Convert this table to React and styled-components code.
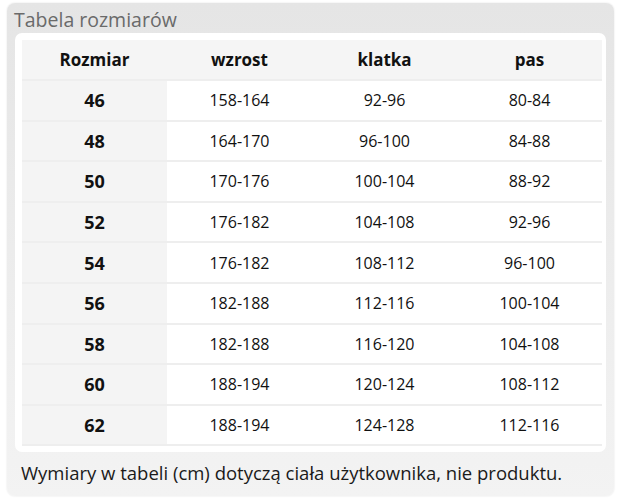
import styled, { createGlobalStyle } from "styled-components";

const Global = createGlobalStyle`
  body {
    margin: 0;
    background: #ffffff;
    font-family: "Open Sans", "Noto Sans", sans-serif;
  }
`;

const Panel = styled.section`
  margin: 3px 5px 2px 7px;
  height: 493px;
  box-sizing: border-box;
  border-radius: 8px;
  background: linear-gradient(#e5e5e5, #f3f3f3);
  box-shadow: 0 0 2px rgba(0, 0, 0, 0.12);
  padding: 5px 8px 0 8px;
  display: flex;
  flex-direction: column;
`;

const Title = styled.h3`
  margin: 0 0 1px -1px;
  font-size: 19.5px;
  font-weight: 400;
  line-height: 24px;
  color: #6a6a6a;
`;

const Card = styled.div`
  background: #ffffff;
  border-radius: 7px;
  padding: 7px 5px 6px 7px;
`;

const Table = styled.table`
  width: 580px;
  border-collapse: collapse;
  table-layout: fixed;
  color: #111;
`;

const HeadCell = styled.th`
  height: 39px;
  padding: 0;
  background: #f5f5f5;
  font-size: 17px;
  font-weight: 700;
  text-align: center;
`;

const Row = styled.tr`
  border-top: 2px solid #eeeeee;
  border-bottom: ${(p) => (p.$last ? "2px solid #eeeeee" : "none")};
`;

const Cell = styled.td`
  height: 38.6px;
  padding: 0;
  text-align: center;
  font-size: ${(p) => (p.$size ? "18px" : "16px")};
  font-weight: ${(p) => (p.$size ? 700 : 400)};
  background: ${(p) => (p.$size ? "#f4f4f4" : "#ffffff")};
`;

const Note = styled.p`
  margin: 9px 0 0 6px;
  font-size: 18.5px;
  line-height: 24px;
  color: #1a1a1a;
`;

const rows = [
  ["46", "158-164", "92-96", "80-84"],
  ["48", "164-170", "96-100", "84-88"],
  ["50", "170-176", "100-104", "88-92"],
  ["52", "176-182", "104-108", "92-96"],
  ["54", "176-182", "108-112", "96-100"],
  ["56", "182-188", "112-116", "100-104"],
  ["58", "182-188", "116-120", "104-108"],
  ["60", "188-194", "120-124", "108-112"],
  ["62", "188-194", "124-128", "112-116"],
];

export default function App() {
  return (
    <>
      <Global />
      <Panel>
        <Title>Tabela rozmiarów</Title>
        <Card>
          <Table>
            <thead>
              <tr>
                <HeadCell>Rozmiar</HeadCell>
                <HeadCell>wzrost</HeadCell>
                <HeadCell>klatka</HeadCell>
                <HeadCell>pas</HeadCell>
              </tr>
            </thead>
            <tbody>
              {rows.map((r, i) => (
                <Row key={r[0]} $last={i === rows.length - 1}>
                  <Cell $size>{r[0]}</Cell>
                  <Cell>{r[1]}</Cell>
                  <Cell>{r[2]}</Cell>
                  <Cell>{r[3]}</Cell>
                </Row>
              ))}
            </tbody>
          </Table>
        </Card>
        <Note>Wymiary w tabeli (cm) dotyczą ciała użytkownika, nie produktu.</Note>
      </Panel>
    </>
  );
}
